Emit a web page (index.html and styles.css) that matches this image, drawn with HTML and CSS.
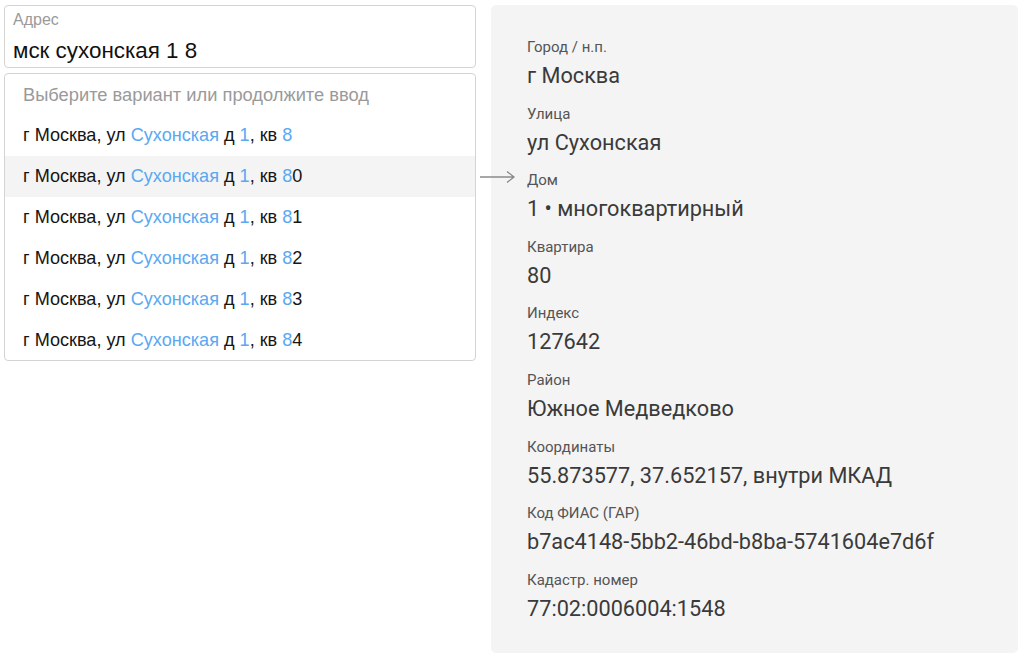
FILE: index.html
```html
<!DOCTYPE html>
<html lang="ru">
<head>
<meta charset="utf-8">
<title>Адрес</title>
<link rel="stylesheet" href="styles.css">
</head>
<body>
<div class="page">
  <div class="left">
    <div class="field">
      <div class="field-label">Адрес</div>
      <div class="field-value">мск сухонская 1 8</div>
    </div>
    <div class="dropdown">
      <div class="hint">Выберите вариант или продолжите ввод</div>
      <div class="item">г Москва, ул <span class="hl">Сухонская</span> д <span class="hl">1</span>, кв <span class="hl">8</span></div>
      <div class="item active">г Москва, ул <span class="hl">Сухонская</span> д <span class="hl">1</span>, кв <span class="hl">8</span>0</div>
      <div class="item">г Москва, ул <span class="hl">Сухонская</span> д <span class="hl">1</span>, кв <span class="hl">8</span>1</div>
      <div class="item">г Москва, ул <span class="hl">Сухонская</span> д <span class="hl">1</span>, кв <span class="hl">8</span>2</div>
      <div class="item">г Москва, ул <span class="hl">Сухонская</span> д <span class="hl">1</span>, кв <span class="hl">8</span>3</div>
      <div class="item">г Москва, ул <span class="hl">Сухонская</span> д <span class="hl">1</span>, кв <span class="hl">8</span>4</div>
    </div>
  </div>
  <div class="panel">
    <svg class="arrow" width="40" height="14" viewBox="0 0 40 14"><path d="M0 7H34M27 1.5L34 7L27 12.5" fill="none" stroke="#8a8a8a" stroke-width="1.3"/></svg>
    <div class="group"><div class="label">Город / н.п.</div><div class="value">г Москва</div></div>
    <div class="group"><div class="label">Улица</div><div class="value">ул Сухонская</div></div>
    <div class="group"><div class="label">Дом</div><div class="value">1 • многоквартирный</div></div>
    <div class="group"><div class="label">Квартира</div><div class="value">80</div></div>
    <div class="group"><div class="label">Индекс</div><div class="value">127642</div></div>
    <div class="group"><div class="label">Район</div><div class="value">Южное Медведково</div></div>
    <div class="group"><div class="label">Координаты</div><div class="value">55.873577, 37.652157, внутри МКАД</div></div>
    <div class="group"><div class="label">Код ФИАС (ГАР)</div><div class="value">b7ac4148-5bb2-46bd-b8ba-5741604e7d6f</div></div>
    <div class="group"><div class="label">Кадастр. номер</div><div class="value">77:02:0006004:1548</div></div>
  </div>
</div>
</body>
</html>
```

FILE: styles.css
```css
html, body {
  margin: 0;
  padding: 0;
  background: #ffffff;
}
.page {
  display: flex;
  gap: 15px;
  padding: 5px 6px 0 4px;
  align-items: flex-start;
}
.left {
  width: 472px;
  display: flex;
  flex-direction: column;
  gap: 5px;
  font-family: "Liberation Sans", Arial, sans-serif;
}
.field {
  box-sizing: border-box;
  height: 63px;
  border: 1px solid #d4d4d4;
  border-radius: 4px;
  padding: 5px 0 0 8px;
}
.field-label {
  font-size: 16px;
  line-height: 18px;
  color: #9a9a9a;
}
.field-value {
  font-size: 22.4px;
  line-height: 32px;
  color: #111111;
  margin-top: 6px;
}
.dropdown {
  box-sizing: border-box;
  height: 288px;
  border: 1px solid #d4d4d4;
  border-radius: 4px;
  overflow: hidden;
}
.hint {
  height: 41px;
  line-height: 41px;
  padding-left: 18px;
  font-size: 18.3px;
  color: #9a9a9a;
}
.item {
  height: 41px;
  line-height: 41px;
  padding-left: 18px;
  font-size: 18.1px;
  color: #151515;
}
.item.active {
  background: #f4f4f4;
}
.hl {
  color: #5aa8f2;
}
.panel {
  position: relative;
  box-sizing: border-box;
  width: 527px;
  height: 648px;
  background: #f4f4f4;
  border-radius: 5px;
  padding: 28px 0 0 36px;
  font-family: Roboto, "Noto Sans", sans-serif;
}
.arrow {
  position: absolute;
  left: -11px;
  top: 165px;
}
.group {
  margin-bottom: 8.6px;
}
.label {
  font-size: 15px;
  line-height: 28px;
  color: #555555;
}
.value {
  font-size: 21.7px;
  line-height: 30px;
  color: #3a3a3a;
}
```
